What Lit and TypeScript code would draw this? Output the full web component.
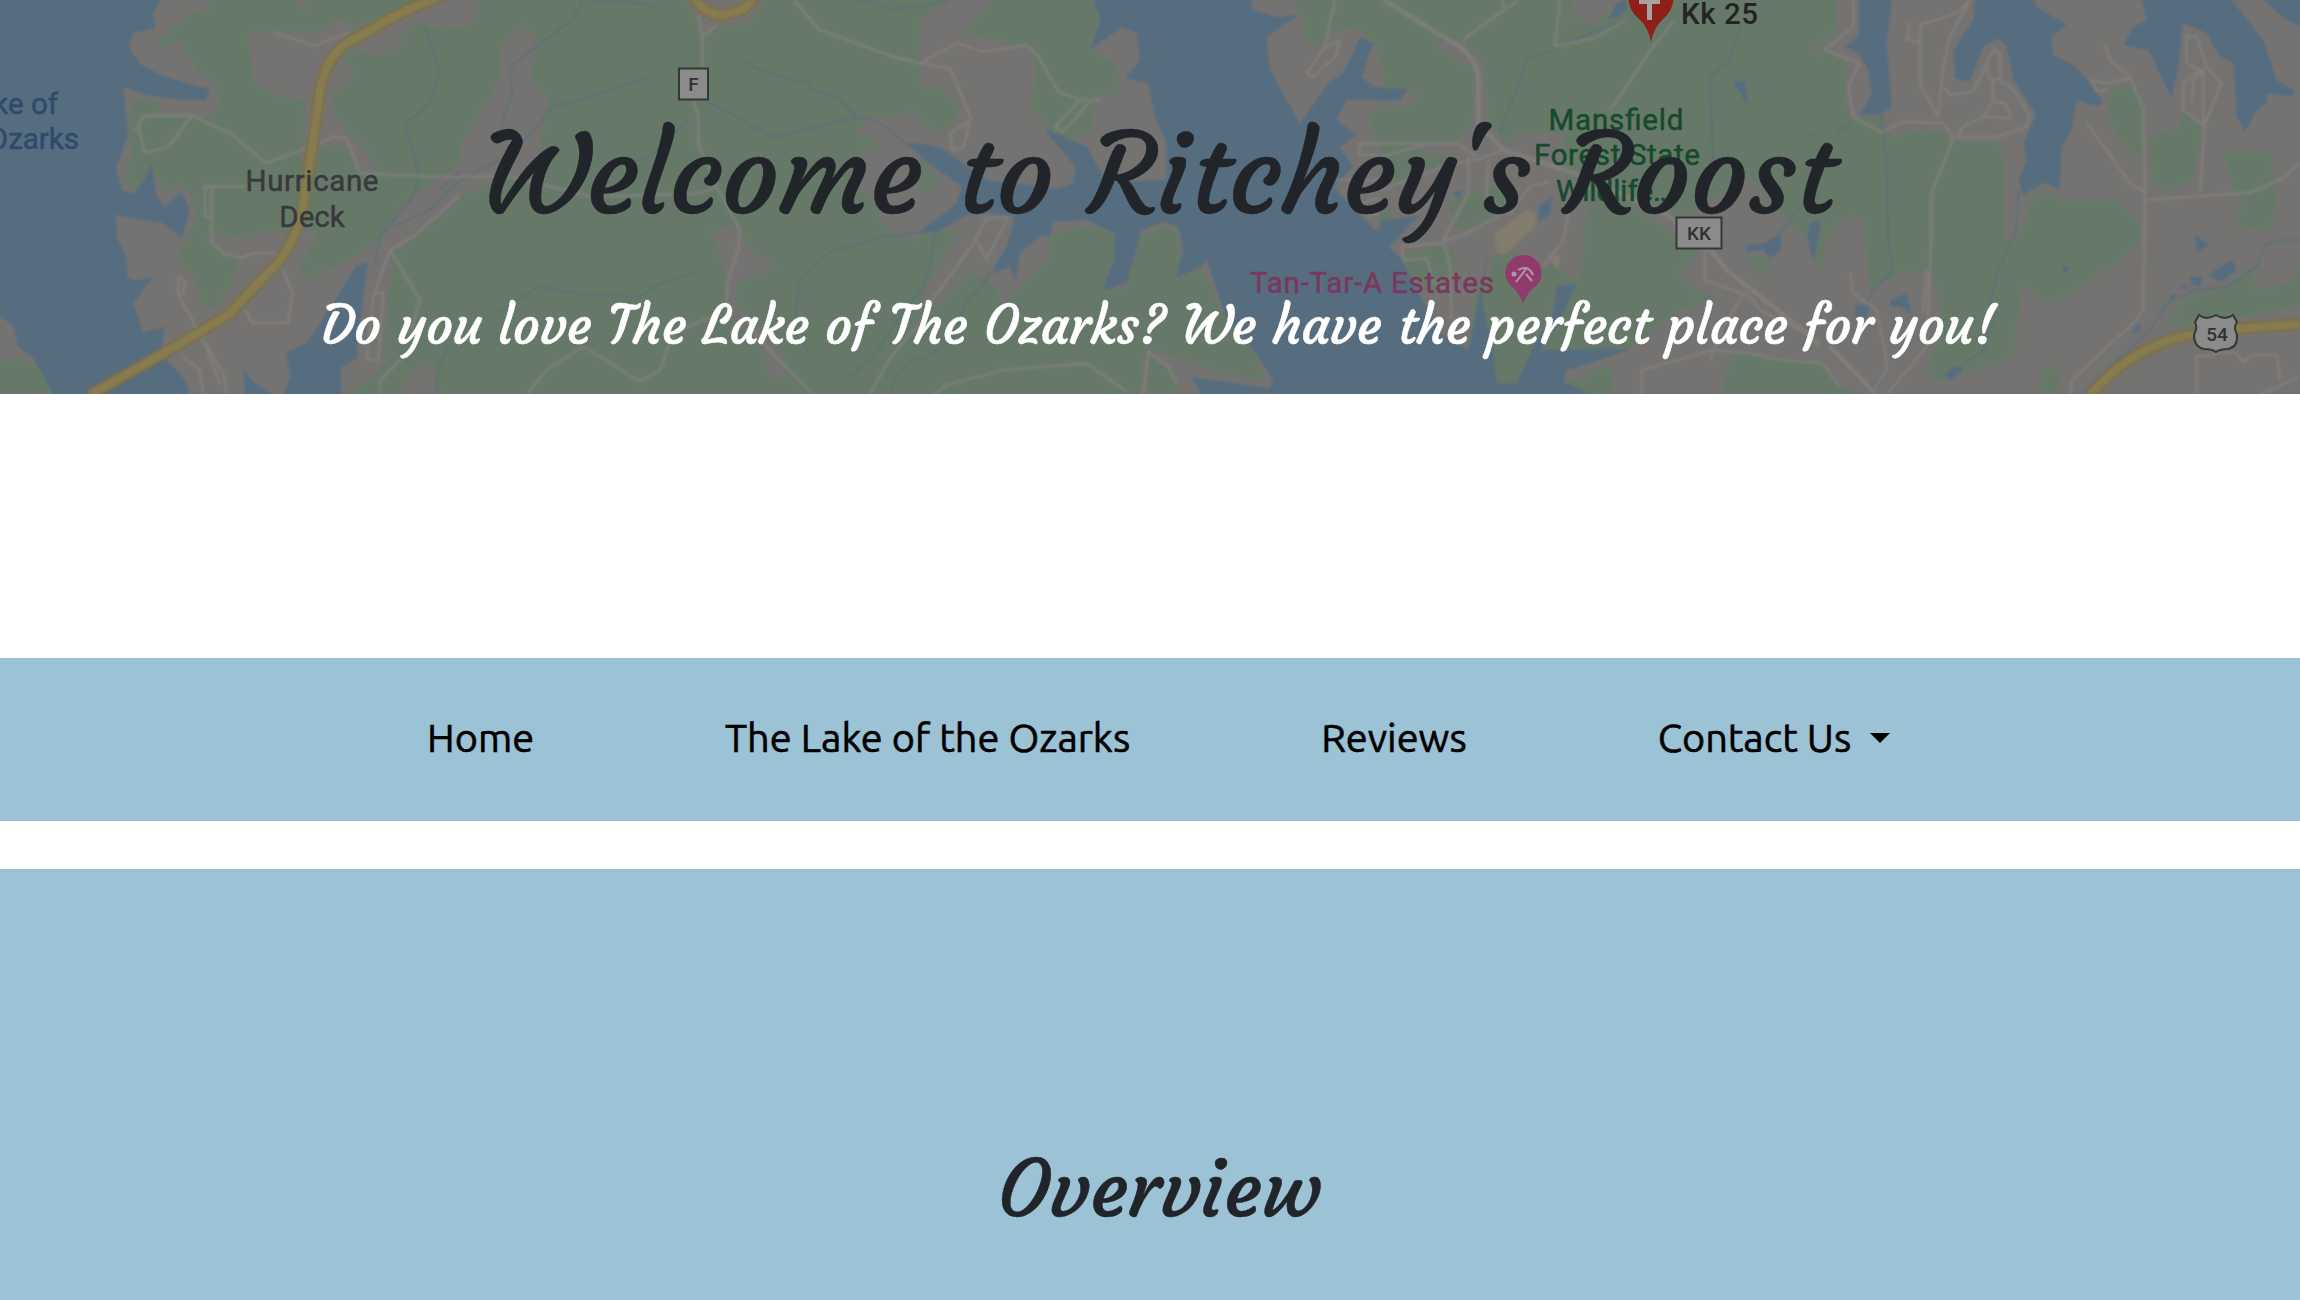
import { LitElement, html, css, svg } from "lit";
import { customElement } from "lit/decorators.js";

@customElement("lake-map")
export class LakeMap extends LitElement {
  static styles = css`
    :host { display: block; width: 100%; height: 100%; }
    .map { display: block; width: 100%; height: 100%; }
    .soft { filter: blur(0.9px); }
    .land { fill: #757371; }
    .wood { fill: #667968; }
    .lake { fill: #566d80; }
    .sand { fill: #827d6c; }
    .road { fill: none; stroke: #84827f; stroke-width: 8; stroke-linejoin: round; opacity: 0.7; }
    .wide { stroke-width: 14; }
    .creek { fill: none; stroke: #596f79; stroke-width: 6; stroke-linejoin: round; opacity: 0.8; }
    .hwy-edge { fill: none; stroke: #7c6d45; stroke-width: 36; }
    .hwy { fill: none; stroke: #877c4f; stroke-width: 25; }
    .label { font-family: Roboto, sans-serif; font-size: 29.5px; stroke-width: 0.5; }
    .town { fill: #38393a; stroke: #38393a; }
    .water-name { fill: #2f4a6b; stroke: #2f4a6b; }
    .park { fill: #17492d; stroke: #17492d; }
    .resort { fill: #79385d; stroke: #79385d; }
    .pin-name { fill: #232323; font-weight: 500; }
    .sign { fill: #8b8b8b; stroke: #343834; stroke-width: 2; }
    .sign-text { font: 500 19px Roboto, sans-serif; fill: #303030; }
  `;

  private west() {
    return svg`<svg x="0" y="0" width="461" height="395" viewBox="0 0 1383 1185">
      <rect class="land" width="1440" height="1185"/>
      <path class="wood" d="M630 0H1440V420L1370 500 1250 580 1190 650 1130 720 1050 780 920 838 897 805 950 700 900 680 860 700 810 690 740 718 640 695 610 715 720 780 690 870 640 932 600 900 580 830 530 775 560 710 590 650 565 570 535 550 490 585 455 500 410 570 370 545 395 470 385 380 400 300H470L490 350H570L640 345 660 300 640 250 590 210 540 125 500 140 470 125 520 80 570 35 620 40Z"/>
      <path class="wood" d="M1440 560 1300 670 1180 760 1165 890 1150 1100 1050 1185H1440ZM0 1080 70 1075 120 1100 170 1185H0Z"/>
      <path class="land" d="M745 95 960 95 1010 58 1070 80 1030 180 1065 215 1045 250 995 280 1000 330 1040 400 1090 440 1140 515 1075 515 1030 430 960 440 930 500 900 480 920 300 850 290 760 250ZM1060 140Q1130 180 1190 150 1210 80 1260 65 1350 110 1400 60L1440 0H1300L1040 90ZM885 0H925L912 25ZM1230 1120 1290 1090 1320 1185H1200ZM1180 650 1230 590 1330 540 1280 640 1200 710Z"/>
      <path class="lake" d="M0 0H482L460 40 465 85 400 100 385 140 420 190 480 225 560 250 630 268 618 300 540 300 440 285 370 262 385 400 350 500 365 570 400 582 430 545 455 490 470 590 495 618 545 575 570 630 545 715 490 670 345 645 355 720 380 770 382 830 410 842 458 830 400 910 430 997 495 980 480 1060 520 1100 560 1145 570 1185H160L100 1075 55 1040 40 980 0 945Z"/>
      <path class="lake" d="M1105 785 1065 800 1000 910 920 1030 858 1055 870 1130 850 1185H1025V1100L1070 1075 1085 920ZM730 1108 765 1150 820 1185H735Z"/>
      <path class="creek" d="M1275 85 1320 220 1285 310 1215 375 1255 520 1240 590 1140 710 1125 790M1440 480 1290 630 1180 680M1440 515H1380L1320 570M1310 1185 1315 1100 1345 1040"/>
      <path class="road" d="M820 97 945 137 1050 95M430 347H575L505 440 435 458 415 380 430 347M395 390H415M575 347 690 400 800 490 920 445 1000 410 1040 415 1080 520 1440 535M735 560H615V650H635M635 560V730L670 760 720 775 760 760H830M850 810 877 880 865 968H755L735 930M540 830 555 850 550 880 535 885V830M535 885 610 1020 660 1150M550 1070 600 1110 610 1185M610 1020 670 1120 680 1185M1440 530 1240 710 1170 750 1260 900 1230 1000M1170 750 1120 890 1100 1080H1135L1150 880 1120 880M1230 1050 1140 1140V1185"/>
      <path class="hwy-edge" d="M1400-35Q1280 0 1180 50L1040 130Q980 170 960 270L940 420 915 580Q900 700 840 780L690 940 560 1020 270 1185"/>
      <path class="hwy" d="M1400-35Q1280 0 1180 50L1040 130Q980 170 960 270L940 420 915 580Q900 700 840 780L690 940 560 1020 270 1185"/>
    </svg>`;
  }

  private woods() {
    return svg`<svg x="460" y="0" width="461" height="395" viewBox="0 0 1383 1185">
      <rect class="wood" width="1440" height="1185"/>
      <path class="land" d="M0 0H60L45 60 0 85ZM185 75Q230 85 225 140L215 235 265 300 240 430 260 560 130 530 0 590V440L40 380 120 230 125 130ZM670 0H910L870 70 790 75 735 110 710 45ZM1440 20 1405 90 1375 180 1390 250 1440 262ZM1190 400 1220 350 1360 340 1440 380V725L1300 705 1260 660 1250 600 1190 560 1210 450 1255 455 1240 410ZM755 700 830 670 870 750 950 800 830 850 830 920 880 960 970 1060 980 1130 940 1140 890 1020 800 950 805 830ZM1440 860 1370 970 1350 1000 1440 930Z"/>
      <path class="lake" d="M1340 430H1380L1440 450V530L1400 480ZM1440 640 1375 700 1440 695Z"/>
      <path class="creek" d="M370 0 340 55 150 200 155 280 120 390M575 230 440 275 280 320 160 460 0 540M390 0 500 5 600 20M860 185Q920 230 1040 248L1060 270 1120 285 1190 350 940 412 830 350 730 300M1190 350 1250 360 1350 440M110 940 235 860 380 885 540 890 600 850 710 820M1440 690 1270 710 1110 755 1015 840 1005 1000 1050 1060M685 360 570 470 510 485M1420 710 1390 850 1240 1070 1170 1130M1200 0 1280 25 1440 20M1440 1020 1310 1120 1290 1185"/>
      <path class="road" d="M715 45 727 110V200M770 75 727 110M700 300 715 350V430L770 560 840 690 835 750 800 850V940M0 530H150L270 560 400 590 720 580 770 560M1000 0 1080 90 1300 170 1440 205M1400 190 1440 160M200 1185 260 1110 370 1040 540 1145 600 1110 640 1000 750 950M860 960 900 1020 1060 1185M1440 930 1350 1000 1280 1090 1230 1185"/>
      <path class="hwy-edge" d="M690-25Q735 50 790 45L850 28 895-20"/>
      <path class="hwy" d="M690-25Q735 50 790 45L850 28 895-20"/>
    </svg>`;
  }

  private channel() {
    return svg`<svg x="920" y="0" width="461" height="395" viewBox="0 0 1383 1185">
      <rect class="lake" width="1440" height="1185"/>
      <path class="land" d="M0 0H520L540 60 510 150 605 82 650 100 660 180 615 235 685 250 705 350 740 430V540L560 545 500 440 370 385 465 500 460 550 410 565 200 540 65 445 0 430ZM0 470 125 560 110 610 0 695ZM0 700 45 700 130 650 200 638 285 650 260 740 205 825 270 800 285 850 300 760 365 705 390 715 400 665 500 660 585 700 580 790 535 875 620 850 665 690 730 665 775 680 790 750 765 835 845 800 860 780 940 1020 1000 1050 1060 1140 1050 1165 810 1130 845 1185H0Z"/>
      <path class="wood" d="M220 0H520L540 50 510 150 590 190 605 280 520 290 515 400 450 420 385 390 330 315 350 220 340 140 120 100ZM0 258 70 265 120 330 80 400 0 370ZM0 475 60 540 40 570 0 575ZM0 700 100 690 200 650 190 720 30 940 150 810 230 860 245 920 330 830 390 770 385 710 430 690 540 680 585 700 580 790 545 870 620 860 660 710 730 680 775 690 780 750 770 835 850 810 900 930 1000 1050 1035 1140 930 1130 690 1045 660 1185H0ZM0 0H90L0 60Z"/>
      <path class="land" d="M150 640 285 650 260 740 210 825 190 760 140 780 20 950 0 890ZM665 1070 690 1045 780 1100 920 1145 810 1130 845 1185H670Z"/>
      <path class="land" d="M995 0H1440V90L1400 180 1440 260 1360 260 1325 230 1360 130 1320 110 1270 220 1225 250 1140 370 1050 210 1040 110 1135 45 1070 50 1000 30ZM1440 300 1280 300 1250 360 1310 405 1260 440 1300 500 1240 560 1365 690 1440 650ZM1440 700 1405 750 1440 785Z"/>
      <path class="wood" d="M1115 0H1440V260L1390 250 1370 140 1310 80 1220 100 1200 140 1145 120 1150 60ZM1340 330H1440V415L1365 415ZM680 1060 760 1110 770 1185H690Z"/>
      <path class="creek" d="M90 0 0 25M45 700 30 800 0 900M210 825 130 920 100 1020 0 1080"/>
      <path class="road" d="M0 190 110 130 190 155 320 135 355 170 415 275 480 300H545M0 190 90 205 155 360 90 400 95 450 130 440 150 370M480 300 405 380 430 395 510 305M1245 0 1215 140 1160 220 1180 230 1245 170 1260 125 1215 140M1380 0 1440 35M1440 430H1320V465H1440M1240 540H1440M1300 620 1440 570M1340 650 1440 620M30 910 160 730 200 655 265 650 200 775 170 725M40 1185 80 1155 250 1110 500 1090 620 1175M670 1185 685 1055 745 1100 770 1150"/>
    </svg>`;
  }

  private forest() {
    return svg`<svg x="1380" y="0" width="441" height="395" viewBox="0 0 1323 1185">
      <rect class="wood" width="1440" height="1185"/>
      <path class="land" d="M0 180 15 260 80 270 110 290 100 320 0 310ZM160 135 240 120 310 180 325 370 390 440 410 400H550V520L610 560 620 620 600 850 530 800 525 960 450 1060 350 1040 310 900 290 820 265 1050 180 1000 130 900 60 770 25 750 80 680 0 600V560L220 480 90 440 230 430 280 360 285 210ZM570 0H730L640 75 590 50ZM890 830 960 750 750 620 870 620 890 660 950 630 1060 560 1100 520 1210 650 1280 720 1320 800 1360 670 1440 650V1185H1370L1300 1080 1060 1060 1020 1185H700L690 1090 560 1150 550 1110 700 1040 750 1045 900 930 1000 900ZM1323 100V190L1300 150Z"/>
      <path class="lake" d="M0 265H85L60 300 0 303ZM0 665 120 645 25 740 60 770 180 1000 265 1050 325 750 305 900 340 1050 360 1150H410L445 1050 515 960 530 860 590 850 540 960 480 1050 700 1045 750 1050 560 1110 550 1145 640 1185H0ZM685 60 710 10 740 0 735 40ZM1060 245H1095L1105 320ZM1095 735 1155 730 1200 700 1205 750 1170 775 1150 750 1100 755ZM1290 665H1325L1300 785 1282 720ZM475 620 515 590 510 645 475 665ZM215 580 245 570 240 600Z"/>
      <path class="sand" d="M345 700 440 630 470 640 465 680 380 760 350 760ZM505 770 540 765 535 810Z"/>
      <path class="wood" d="M340 770 400 760 430 790 540 810 510 950 450 1060 410 1150H350L340 1050 310 900ZM70 770 180 730 230 760 210 870 150 880 90 830ZM200 600 340 560 400 600 300 680 230 690ZM1090 760 1180 780 1145 830ZM1280 740 1320 820 1340 690 1305 790Z"/>
      <path class="creek" d="M740 60 620 105 440 180 360 400M1080 80 1050 180 990 230 1000 500M1420 370 1270 410M1260 620 1200 700M1440 500 1260 620"/>
      <path class="road wide" d="M10 0 240 140Q300 190 295 250V370L370 450 600 525 870 650 1000 760 1040 810 1280 1000 1440 1140"/>
      <path class="road" d="M250 130 260 110 415 0M370 0V25M540 0 525 140 640 115 740 60M885 60 820 140 690 330M0 470 150 430M0 570 220 490 290 480 370 450M0 430H230L290 470M265 470V580L190 720 210 800 215 960M325 480 320 600 390 640 450 560 510 545M60 740 180 730 260 700 370 640M65 745 70 780 140 775 160 850 210 870M570 620 550 720 490 800M975 750V840L1110 890 1140 930 1280 1000M1100 870 1030 980 990 1080M785 1185V1110L1000 1050 1110 1060 1200 1080 1340 1090 1350 1130 1400 1185M1420 0 1390 90 1325 150 1440 200M1440 350 1400 240"/>
    </svg>`;
  }

  private east() {
    return svg`<svg x="1820" y="0" width="480" height="395" viewBox="0 0 1440 1185">
      <rect class="land" width="1440" height="1185"/>
      <path class="wood" d="M0 0H45L50 70 10 145 80 190 75 300 100 355 170 350 220 410 310 390 380 400 410 425H540L555 500 550 600 555 720 600 710 640 590 680 570 720 600 890 600 965 680 960 720 900 780 760 880 680 910 610 855 595 960 580 1070 440 1120 370 1145 310 1130 360 1000 365 900 320 810 240 820 150 870 130 660 80 650 20 720 0 820ZM870 260H940L975 340 970 480 900 430 865 350ZM985 410 1080 380 1090 330 1140 375V440L1120 540 1030 580 995 540ZM1210 450 1350 455 1360 550 1370 600 1350 700 1250 675 1265 590 1240 570ZM1440 780 1410 850 1310 870 1300 800 1200 870 1100 890 1040 970 1120 985 1440 915ZM650 1185 670 1110 700 1100 725 1130 710 1185ZM0 1080 60 1160 110 1185H0Z"/>
      <path class="lake" d="M115 0H215L200 130 215 320 180 345 120 345 155 280 145 210 120 165 75 140 115 110ZM465 0H640L650 20 740 75 695 110 700 165 770 200 845 300 840 320 770 300 755 390 725 440 720 570 670 548 610 585 595 540 620 480 610 430 645 350 640 330 580 240 560 140 535 115 490 140 450 245 405 235 400 150 460 60ZM965 0H1235L1330 120 1370 240 1420 270V290L1340 280V310L1310 330 1275 395 1250 350 1240 190 1200 170 1160 100 1090 70 1075 200 1055 295 985 150 910 135 940 80 980 60ZM1330 0H1440V78L1400 60Z"/>
      <path class="lake" d="M1125 705 1170 735 1130 758ZM1165 825 1235 780 1250 810 1205 845ZM1110 830H1150L1140 860 1115 855ZM1080 855 1110 860 1090 870ZM1045 890 1070 880 1060 905ZM935 1000 960 965V995ZM370 1125 410 1095 430 1110 395 1140ZM105 910 150 920 140 955 105 950ZM210 900 260 880 275 945 245 920 210 920ZM725 800 745 795 742 820 730 820ZM0 670V730Z"/>
      <path class="creek" d="M185 345 200 500 205 720 220 810 160 870 140 910M595 570 590 690 535 810 505 930M520 960 490 1050 420 1100M100 370 45 400M1440 720 1380 720 1330 740 1310 800 1220 860 1130 870 1040 910 990 990 780 1185M190 1130 150 1160"/>
      <path class="road" d="M100 0 100 80 15 150 120 190 85 260 100 350 185 398 250 365 370 370 400 415 335 580V700L330 810 320 1040 200 1185M450 0 410 40 300 75V255L355 350 370 200 390 110 450 0M270 65 260 120 295 125M370 260 390 285 460 275 500 190 520 150 540 160V235L510 240 500 200M520 240V300L490 350 575 355 555 310 520 305M540 240 590 280 630 350 620 380 530 412H410M490 350 430 380 410 415M855 130 870 180 930 230 970 330 975 570 970 930 950 960 755 1140 750 1185M980 600 1290 578 1380 540 1440 490M800 370 860 450 930 550 975 575M860 250 815 240 830 275 860 270M860 250 930 235M1100 110 1130 110 1160 200 1205 250 1155 370 1140 575M1100 100V190L1140 210 1090 250V330L1155 380M1150 210 1120 240 1115 310M1150 210V370M320 810 310 940M90 820 100 880 170 930 195 1050 200 1110 165 1160M0 1080 60 1160M1130 1185V1070L1240 1055 1270 1085 1300 1065H1370L1380 1140M1320 1185 1440 1130"/>
      <path class="road wide" d="M30 1040 170 1185"/>
      <path class="hwy-edge" d="M810 1185Q920 1060 1050 1020 1140 990 1440 973"/>
      <path class="hwy" d="M810 1185Q920 1060 1050 1020 1140 990 1440 973"/>
    </svg>`;
  }

  render() {
    return html`<svg class="map" viewBox="0 0 2300 393.5" preserveAspectRatio="none" aria-hidden="true">
      <g class="soft">${this.west()}${this.woods()}${this.channel()}${this.forest()}${this.east()}</g>
      <g class="label water-name"><text x="58" y="114" text-anchor="end">Lake of</text><text x="79" y="149" text-anchor="end">the Ozarks</text></g>
      <g class="label town" text-anchor="middle">
        <text x="312" y="191" textLength="133">Hurricane</text><text x="312" y="227">Deck</text>
      </g>
      <g class="label park" text-anchor="middle">
        <text x="1616" y="130" textLength="135">Mansfield</text><text x="1617" y="165" textLength="166">Forest State</text><text x="1556" y="201" text-anchor="start">Wildlife…</text>
      </g>
      <text class="label resort" x="1250" y="293" textLength="244">Tan-Tar-A Estates</text>
      <path d="M1523 304Q1519 292 1510 285A18 18 0 1 1 1537 285Q1527 292 1523 304Z" fill="#8f3c6c"/>
      <circle cx="1514" cy="274" r="2.5" fill="#b796a9"/>
      <path d="M1518 270Q1528 264 1533 275M1526 269 1516 282M1526 274 1532 281" fill="none" stroke="#b796a9" stroke-width="2"/>
      <path d="M1651 42Q1648 26 1638 18 1629 11 1628-4H1674Q1673 11 1663 19 1654 27 1651 42Z" fill="#8f2019"/>
      <path d="M1639 0H1660V4H1652V20H1647V4H1639Z" fill="#a8a3a0"/>
      <text class="label pin-name" x="1681" y="24" textLength="77">Kk 25</text>
      <rect class="sign" x="679" y="68.5" width="29" height="31"/>
      <text class="sign-text" x="693.5" y="91" text-anchor="middle">F</text>
      <rect class="sign" x="1676.5" y="217.5" width="45" height="31"/>
      <text class="sign-text" x="1699" y="240" text-anchor="middle">KK</text>
      <path class="sign" d="M2199 315Q2206 321 2216 315 2225 321 2233 315L2237 322Q2233 327 2237 335 2238 347 2228 349 2220 349 2216 352 2212 349 2204 349 2194 347 2194 335 2198 327 2195 322Z"/>
      <text class="sign-text" x="2217" y="341" text-anchor="middle">54</text>
    </svg>`;
  }
}

@customElement("app-root")
export class AppRoot extends LitElement {
  static styles = css`
    :host { display: block; width: 100%; height: 1300px; overflow: hidden; background: #fff; }
    .page { display: flex; flex-direction: column; height: 1300px; }
    .hero { display: grid; height: 393.5px; flex: none; overflow: hidden; background: #677374; }
    .hero > * { grid-area: 1 / 1; min-width: 0; min-height: 0; }
    .intro { display: flex; flex-direction: column; align-items: center; padding-left: 17px; z-index: 1; }
    h1, h2, p { margin: 0; white-space: nowrap; font-family: Courgette, Lato, sans-serif; font-weight: 500; color: #212529; -webkit-text-stroke: 0.5px currentColor; }
    h1 { font-size: 111.4px; line-height: 136px; padding-top: 106px; }
    p { font-size: 52.5px; line-height: 66px; padding-top: 51px; color: #fff; }
    nav { display: flex; align-items: center; gap: 191px; flex: none; height: 163px; margin-top: 264px; padding-left: 427px; background: #9cc2d5; }
    a { color: #000; text-decoration: none; white-space: nowrap; font: 400 39.7px/60px Ubuntu, "Noto Sans", sans-serif; -webkit-text-stroke: 0.6px #000; margin-top: -2px; }
    .menu { display: flex; align-items: center; gap: 19px; }
    .caret { border: 10px solid transparent; border-top-color: #000; border-bottom: 0; }
    .overview { display: flex; flex: 1; justify-content: center; margin-top: 48px; padding: 271px 0 0 19px; background: #9cc2d5; }
    h2 { font-size: 79.8px; line-height: 98px; }
  `;

  private links = ["Home", "The Lake of the Ozarks", "Reviews"];

  render() {
    return html`<div class="page">
      <header class="hero">
        <lake-map></lake-map>
        <div class="intro">
          <h1>Welcome to Ritchey's Roost</h1>
          <p>Do you love The Lake of The Ozarks? We have the perfect place for you!</p>
        </div>
      </header>
      <nav>
        ${this.links.map((name) => html`<a>${name}</a>`)}
        <a class="menu">Contact Us<span class="caret"></span></a>
      </nav>
      <section class="overview"><h2>Overview</h2></section>
    </div>`;
  }
}
